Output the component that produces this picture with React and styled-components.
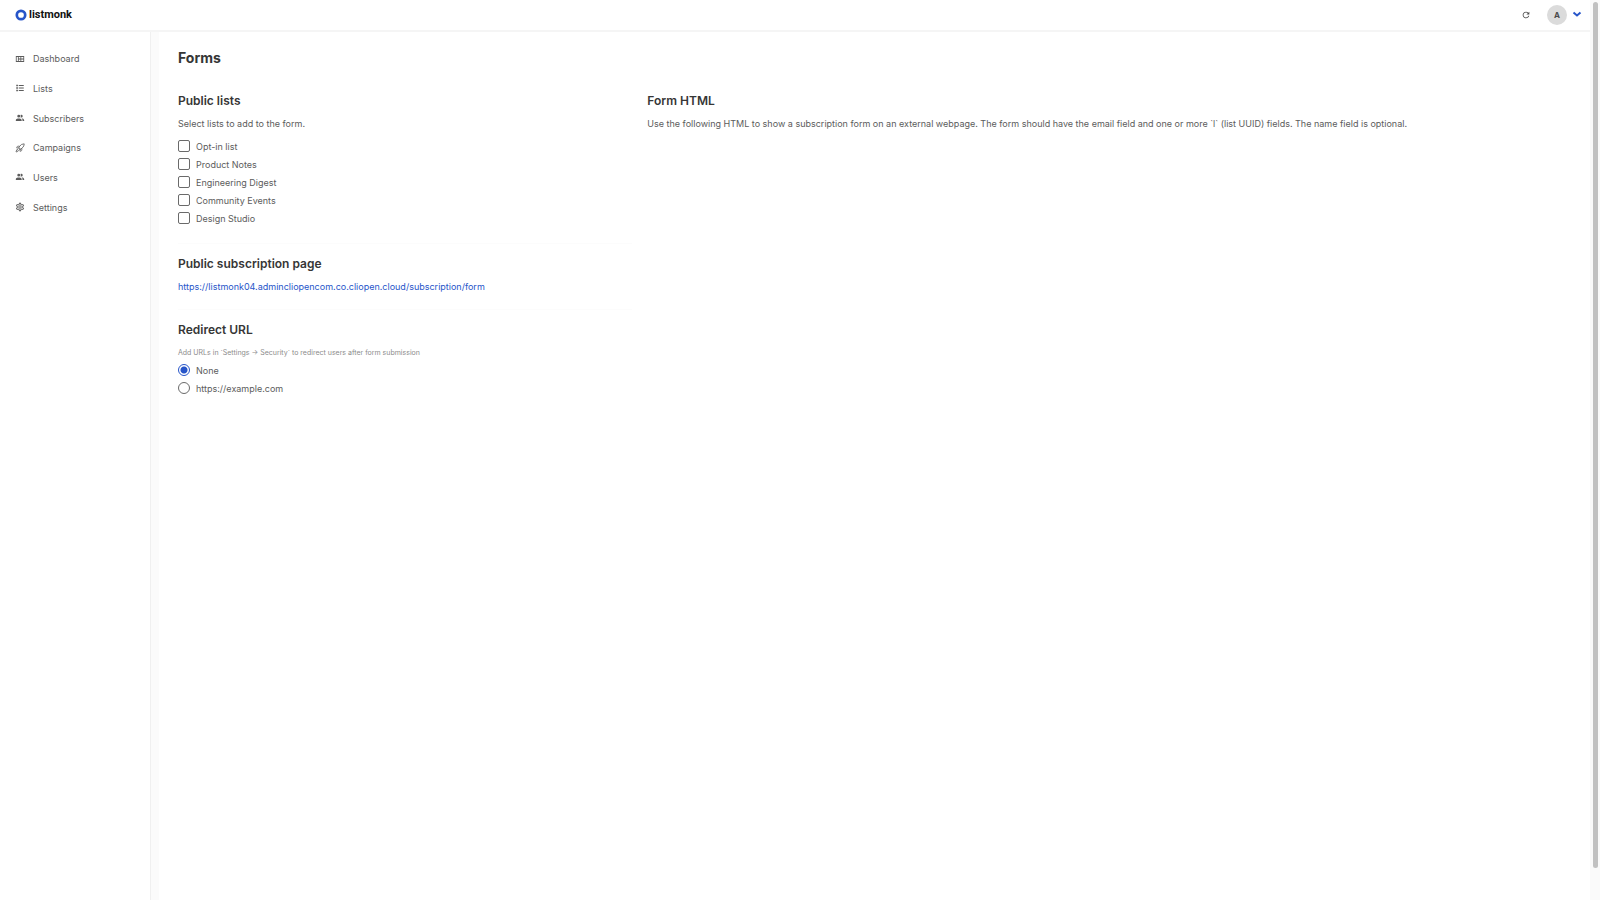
import React, {useState} from 'react';
import styled, {createGlobalStyle, ThemeProvider} from 'styled-components';
import {Rocket} from 'lucide-react';
import {MdRefresh} from 'react-icons/md';

const theme = {
    primary: '#2755c9',
    heading: '#363636',
    text: '#5c5c5c',
    muted: '#8c8c8c',
    line: '#f5f5f5',
    gutter: '#fbfbfb'
};

const GlobalStyle = createGlobalStyle`
    * {
        box-sizing: border-box;
    }
    body {
        margin: 0;
        background: #fff;
        color: ${theme.text};
        font-family: Inter, sans-serif;
        font-size: 9px;
        line-height: 17px;
    }
`;

const Page = styled.div`
    display: flex;
    min-height: 100vh;
`;
const Frame = styled.div`
    flex: 1;
    min-width: 0;
    display: flex;
    flex-direction: column;
`;

const ScrollTrack = styled.div`
    width: 10px;
    height: 100vh;
    padding: 2px 2px 32px 3px;
    background: #fafafa;
    position: sticky;
    top: 0;
`;
const ScrollThumb = styled.div`
    height: 100%;
    border-radius: 3px;
    background: #c1c1c1;
`;

const Navbar = styled.header`
    display: flex;
    align-items: center;
    justify-content: space-between;
    height: 32px;
    padding: 0 8px 1px 15px;
    border-bottom: 2px solid ${props => props.theme.line};
`;
const Brand = styled.a`
    display: flex;
    align-items: center;
    gap: 2px;
    color: #111;
    font-family: Roboto, sans-serif;
    font-size: 11px;
    font-weight: 700;
    text-decoration: none;
`;
const NavActions = styled.div`
    display: flex;
    align-items: center;
`;
const IconButton = styled.button`
    display: flex;
    margin-right: 16px;
    padding: 0;
    border: 0;
    background: none;
    color: #4a4a4a;
    font-size: 10px;
`;
const ProfileButton = styled.button`
    display: flex;
    align-items: center;
    gap: 5px;
    padding: 0;
    border: 0;
    background: none;
    color: ${props => props.theme.primary};
`;
const Avatar = styled.span`
    width: 20px;
    height: 20px;
    border-radius: 50%;
    background: #dbdbdb;
    color: #4a4a4a;
    font: 700 8px/20px Inter, sans-serif;
    text-align: center;
`;

const Body = styled.div`
    flex: 1;
    display: flex;
    background: ${props => props.theme.gutter};
`;
const Sidebar = styled.nav`
    width: 151px;
    flex-shrink: 0;
    padding: 12px 15px;
    background: #fff;
    border-right: 1px solid #f0f0f0;
`;
const Menu = styled.ul`
    display: grid;
    grid-auto-rows: 1fr;
    min-height: 178px;
    margin: 0;
    padding: 0;
    list-style: none;
`;
const MenuLink = styled.a`
    display: flex;
    align-items: center;
    gap: 8px;
    height: 100%;
    color: ${props => props.theme.text};
    text-decoration: none;

    & svg {
        width: 10px;
        height: 10px;
        flex-shrink: 0;
    }
`;

const Main = styled.main`
    flex: 1;
    min-width: 0;
    margin-left: 8px;
    padding: 16px 19px;
    background: #fff;
`;
const Title = styled.h1`
    margin: 0 0 25px;
    color: ${props => props.theme.heading};
    font-size: 14px;
    font-weight: 700;
    line-height: 20px;
`;
const Columns = styled.div`
    display: grid;
    grid-template-columns: repeat(3, 1fr);
    gap: 15px;
`;
const Column = styled.div`
    grid-column: span ${props => props.$span || 1};
`;
const Section = styled.section`
    padding-bottom: 14px;

    & + & {
        padding-top: 12px;
        border-top: 1px solid ${props => props.$faint ? '#fcfcfc' : props.theme.line};
    }
`;
const Subtitle = styled.h2`
    margin: 0 0 6px;
    color: ${props => props.theme.heading};
    font-size: 12px;
    font-weight: 600;
    line-height: 16px;
`;
const Text = styled.p`
    margin: 0 0 5px;
`;
const Help = styled.p`
    margin: 0;
    color: ${props => props.theme.muted};
    font-size: 7px;
`;
const Link = styled.a`
    color: ${props => props.theme.primary};
    text-decoration: none;
`;
const Choices = styled.fieldset`
    display: flex;
    flex-direction: column;
    margin: 0 0 2px;
    padding: 0;
    border: 0;
`;
const Choice = styled.label`
    display: flex;
    align-items: center;
    gap: 6px;
    height: 18px;
`;
const Check = styled.input`
    appearance: none;
    width: 12px;
    height: 12px;
    margin: 0;
    border: 1px solid #6a6a6a;
    border-radius: 2px;

    &:checked {
        border-color: ${props => props.theme.primary};
        background: ${props => props.theme.primary};
    }
`;
const Radio = styled(Check)`
    border-radius: 50%;

    &:checked {
        background: radial-gradient(circle, ${props => props.theme.primary} 3px, #fff 4px);
    }
`;

const MdiIcon = ({d}) => (
    <svg viewBox="0 0 24 24" fill="currentColor" fillRule="evenodd" aria-hidden="true">
        <path d={d}/>
    </svg>
);

const icons = {
    dashboard: 'M2 5V19H22V5H2M4 7V17H7V7H4M9 7V11H13V7H9M15 7V11H20V7H15M9 13V17H13V13H9M15 13V17H20V13H15Z',
    list: 'M3,4H7V8H3V4M9,5V7H21V5H9M3,10H7V14H3V10M9,11V13H21V11H9M3,16H7V20H3V16M9,17V19H21V17H9',
    people: 'M16 17V19H2V17S2 13 9 13 16 17 16 17M12.5 7.5A3.5 3.5 0 1 0 9 11A3.5 3.5 0 0 0 12.5 7.5M15.94 13A5.32 5.32 0 0 1 18 17V19H22V17S22 13.37 15.94 13M15 4A3.39 3.39 0 0 0 13.07 4.59A5 5 0 0 1 13.07 10.41A3.39 3.39 0 0 0 15 11A3.5 3.5 0 0 0 15 4Z',
    cog: 'M12,8A4,4 0 0,1 16,12A4,4 0 0,1 12,16A4,4 0 0,1 8,12A4,4 0 0,1 12,8M12,10A2,2 0 0,0 10,12A2,2 0 0,0 12,14A2,2 0 0,0 14,12A2,2 0 0,0 12,10M10,22C9.75,22 9.54,21.82 9.5,21.58L9.13,18.93C8.5,18.68 7.96,18.34 7.44,17.94L4.95,18.95C4.73,19.03 4.46,18.95 4.34,18.73L2.34,15.27C2.21,15.05 2.27,14.78 2.46,14.63L4.57,12.97L4.5,12L4.57,11L2.46,9.37C2.27,9.22 2.21,8.95 2.34,8.73L4.34,5.27C4.46,5.05 4.73,4.96 4.95,5.05L7.44,6.05C7.96,5.66 8.5,5.32 9.13,5.07L9.5,2.42C9.54,2.18 9.75,2 10,2H14C14.25,2 14.46,2.18 14.5,2.42L14.87,5.07C15.5,5.32 16.04,5.66 16.56,6.05L19.05,5.05C19.27,4.96 19.54,5.05 19.66,5.27L21.66,8.73C21.79,8.95 21.73,9.22 21.54,9.37L19.43,11L19.5,12L19.43,13L21.54,14.63C21.73,14.78 21.79,15.05 21.66,15.27L19.66,18.73C19.54,18.95 19.27,19.04 19.05,18.95L16.56,17.95C16.04,18.34 15.5,18.68 14.87,18.93L14.5,21.58C14.46,21.82 14.25,22 14,22H10M11.25,4L10.88,6.61C9.68,6.86 8.62,7.5 7.85,8.39L5.44,7.35L4.69,8.65L6.8,10.2C6.4,11.37 6.4,12.64 6.8,13.8L4.68,15.36L5.43,16.66L7.86,15.62C8.63,16.5 9.68,17.14 10.87,17.38L11.24,20H12.76L13.13,17.39C14.32,17.14 15.37,16.5 16.14,15.62L18.57,16.66L19.32,15.36L17.2,13.81C17.6,12.64 17.6,11.37 17.2,10.2L19.31,8.65L18.56,7.35L16.15,8.39C15.38,7.5 14.32,6.86 13.12,6.62L12.75,4H11.25Z'
};

const menu = [
    {label: 'Dashboard', icon: <MdiIcon d={icons.dashboard}/>},
    {label: 'Lists', icon: <MdiIcon d={icons.list}/>},
    {label: 'Subscribers', icon: <MdiIcon d={icons.people}/>},
    {label: 'Campaigns', icon: <Rocket aria-hidden="true"/>},
    {label: 'Users', icon: <MdiIcon d={icons.people}/>},
    {label: 'Settings', icon: <MdiIcon d={icons.cog}/>}
];

const publicLists = ['Opt-in list', 'Product Notes', 'Engineering Digest', 'Community Events', 'Design Studio'];
const redirects = ['None', 'https://example.com'];
const formUrl = 'https://listmonk04.admincliopencom.co.cliopen.cloud/subscription/form';

const App = () => {
    const [selected, setSelected] = useState([]);
    const [redirect, setRedirect] = useState('None');

    const toggleList = name => setSelected(
        selected.includes(name) ? selected.filter(l => l !== name) : [...selected, name]
    );

    return (
        <ThemeProvider theme={theme}>
            <GlobalStyle/>
            <Page>
                <Frame>
                    <Navbar>
                        <Brand href="#">
                            <svg width="12" height="12" viewBox="0 0 12 12" aria-hidden="true">
                                <circle cx="6" cy="6" r="4.2" fill="none" stroke={theme.primary} strokeWidth="2.7"/>
                            </svg>
                            listmonk
                        </Brand>
                        <NavActions>
                            <IconButton aria-label="Refresh"><MdRefresh/></IconButton>
                            <ProfileButton aria-label="Account">
                                <Avatar>A</Avatar>
                                <svg width="10" height="10" viewBox="0 0 10 10" aria-hidden="true">
                                    <path d="M1.5 2.5L5 5.5L8.5 2.5" fill="none" stroke="currentColor" strokeWidth="2"/>
                                </svg>
                            </ProfileButton>
                        </NavActions>
                    </Navbar>
                    <Body>
                        <Sidebar>
                            <Menu>
                                {menu.map(item => (
                                    <li key={item.label}>
                                        <MenuLink href="#">{item.icon}{item.label}</MenuLink>
                                    </li>
                                ))}
                            </Menu>
                        </Sidebar>
                        <Main>
                            <Title>Forms</Title>
                            <Columns>
                                <Column>
                                    <Section>
                                        <Subtitle>Public lists</Subtitle>
                                        <Text>Select lists to add to the form.</Text>
                                        <Choices aria-label="Public lists">
                                            {publicLists.map(name => (
                                                <Choice key={name}>
                                                    <Check
                                                        type="checkbox"
                                                        checked={selected.includes(name)}
                                                        onChange={() => toggleList(name)}
                                                    />
                                                    {name}
                                                </Choice>
                                            ))}
                                        </Choices>
                                    </Section>
                                    <Section>
                                        <Subtitle>Public subscription page</Subtitle>
                                        <Link href={formUrl}>{formUrl}</Link>
                                    </Section>
                                    <Section $faint>
                                        <Subtitle>Redirect URL</Subtitle>
                                        <Help>Add URLs in `Settings → Security` to redirect users after form submission</Help>
                                        <Choices aria-label="Redirect URL">
                                            {redirects.map(url => (
                                                <Choice key={url}>
                                                    <Radio
                                                        type="radio"
                                                        name="redirect"
                                                        checked={redirect === url}
                                                        onChange={() => setRedirect(url)}
                                                    />
                                                    {url}
                                                </Choice>
                                            ))}
                                        </Choices>
                                    </Section>
                                </Column>
                                <Column $span={2}>
                                    <Subtitle>Form HTML</Subtitle>
                                    <Text>
                                        Use the following HTML to show a subscription form on an external webpage. The form
                                        should have the email field and one or more `l` (list UUID) fields. The name field
                                        is optional.
                                    </Text>
                                </Column>
                            </Columns>
                        </Main>
                    </Body>
                </Frame>
                <ScrollTrack aria-hidden="true"><ScrollThumb/></ScrollTrack>
            </Page>
        </ThemeProvider>
    );
};

export default App;
